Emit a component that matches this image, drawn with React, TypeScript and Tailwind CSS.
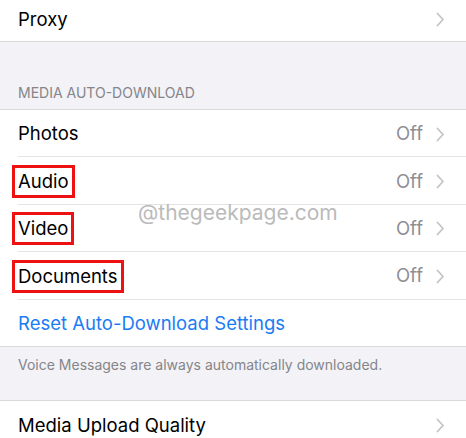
import React from 'react';

const Chevron = () => (
  <svg width="9" height="15" viewBox="0 0 9 15" className="ml-[13px] shrink-0">
    <path d="M1.5 1.5 L7 7.5 L1.5 13.5" fill="none" stroke="#c4c4c8" strokeWidth="1.8" strokeLinecap="round" strokeLinejoin="round" />
  </svg>
);

type RowProps = {
  label: string;
  value?: string;
  marked?: boolean;
};

const Row = ({ label, value, marked }: RowProps) => (
  <div className="h-[47.4px] flex items-center pt-[2px] pr-[21px] ml-[18px] border-b border-[#e3e3e6]">
    {marked ? (
      <span className="-ml-[6px] border-[3px] border-[#ee1111] px-[3px] leading-[27px] text-[18.5px] text-black">{label}</span>
    ) : (
      <span className="text-[18.5px] text-black">{label}</span>
    )}
    <div className="flex-1" />
    {value && <span className="text-[18.5px] text-[#8e8e93]">{value}</span>}
    <Chevron />
  </div>
);

export default function App() {
  return (
    <div className="relative w-[466px] h-[438px] overflow-hidden bg-[#f2f2f7]" style={{ fontFamily: 'Inter, "Noto Sans", sans-serif' }}>
      <div className="bg-white h-[42px] flex items-center pl-[18px] pr-[21px] pb-[2px] border-b border-[#d9d9dc]">
        <span className="text-[18.5px] text-black">Proxy</span>
        <div className="flex-1" />
        <Chevron />
      </div>

      <div className="h-[68px] flex items-end px-[18px] pb-[6px] border-b border-[#d9d9dc]">
        <span className="text-[14px] text-[#858589]">MEDIA AUTO-DOWNLOAD</span>
      </div>

      <div className="bg-white">
        <Row label="Photos" value="Off" />
        <Row label="Audio" value="Off" marked />
        <Row label="Video" value="Off" marked />
        <Row label="Documents" value="Off" marked />
        <div className="h-[47.4px] flex items-center pt-[2px] pl-[18px] border-b border-[#d9d9dc]">
          <span className="text-[18.5px] text-[#1a7cf5]">Reset Auto-Download Settings</span>
        </div>
      </div>

      <div className="h-[54px] px-[18px] pt-[5px] border-b border-[#d9d9dc]">
        <span className="text-[14px] text-[#858589]">Voice Messages are always automatically downloaded.</span>
      </div>

      <div className="bg-white h-[48px] flex items-center pt-[2px] pl-[18px] pr-[21px]">
        <span className="text-[18.5px] text-black">Media Upload Quality</span>
        <div className="flex-1" />
        <Chevron />
      </div>

      <div className="absolute left-[138px] top-[197px] text-[21px] text-[#b4b4b4] opacity-90 pointer-events-none">@thegeekpage.com</div>
    </div>
  );
}
